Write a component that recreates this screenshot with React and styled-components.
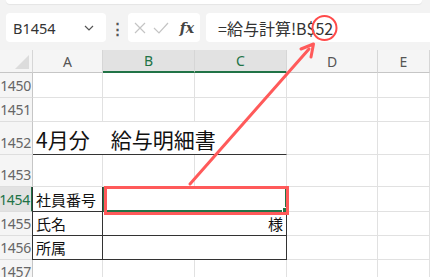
import React from 'react';
import styled, { createGlobalStyle } from 'styled-components';

const GlobalStyle = createGlobalStyle`
  html, body {
    margin: 0;
    padding: 0;
    background: #f3f3f3;
    overflow: hidden;
  }
  body {
    font-family: "Noto Sans CJK JP", "Noto Sans", sans-serif;
  }
`;

const cols = ['A', 'B', 'C', 'D', 'E'];

const App = () => {
  return (
    <Page>
      <GlobalStyle />
      <TopStrip />
      <FormulaBar>
        <NameBox>
          <span>B1454</span>
          <Chevron viewBox="0 0 10 6">
            <path d="M1 1l4 4 4-4" fill="none" stroke="#555" strokeWidth="1.2" />
          </Chevron>
        </NameBox>
        <Dots>⋮</Dots>
        <FxBox>
          <svg width="14" height="14" viewBox="0 0 14 14">
            <path d="M2 2l10 10M12 2L2 12" stroke="#c4c4c4" strokeWidth="1.2" />
          </svg>
          <svg width="16" height="14" viewBox="0 0 16 14">
            <path d="M1 7l5 5L15 2" fill="none" stroke="#c4c4c4" strokeWidth="1.2" />
          </svg>
          <Fx>fx</Fx>
        </FxBox>
        <FormulaInput>=給与計算!B$52</FormulaInput>
      </FormulaBar>

      <Sheet>
        <Corner />
        {cols.map((c) => (
          <ColHead key={c} selected={c === 'B' || c === 'C'}>{c}</ColHead>
        ))}

        <RowHead>1450</RowHead>
        {cols.map((c) => <Cell key={c} />)}

        <RowHead>1451</RowHead>
        {cols.map((c) => <Cell key={c} />)}

        <RowHead>1452</RowHead>
        <Cell span={3} bottomDark>
          <Title>4月分　給与明細書</Title>
        </Cell>
        <Cell />
        <Cell />

        <RowHead>1453</RowHead>
        {cols.map((c) => <Cell key={c} />)}

        <RowHead active>1454</RowHead>
        <Cell box leftDark>社員番号</Cell>
        <Cell span={2} selected />
        <Cell />
        <Cell />

        <RowHead>1455</RowHead>
        <Cell box leftDark>氏名</Cell>
        <Cell span={2} box align="right">様</Cell>
        <Cell />
        <Cell />

        <RowHead>1456</RowHead>
        <Cell box leftDark>所属</Cell>
        <Cell span={2} box />
        <Cell />
        <Cell />

        <RowHead>1457</RowHead>
        {cols.map((c) => <Cell key={c} />)}
      </Sheet>

      <Overlay width="430" height="277" viewBox="0 0 430 277">
        <rect x="105.5" y="187.5" width="182" height="26" fill="none" stroke="#ff5a5a" strokeWidth="3" />
        <circle cx="324.5" cy="28" r="12" fill="none" stroke="#ff4a4a" strokeWidth="2" />
        <line x1="190" y1="184" x2="309" y2="49" stroke="#ff5a5a" strokeWidth="3" strokeLinecap="round" />
        <path d="M313.5 44 L301 49 M313.5 44 L311 57" stroke="#ff5a5a" strokeWidth="3" strokeLinecap="round" fill="none" />
      </Overlay>
    </Page>
  );
};

const Page = styled.div`
  position: relative;
  width: 430px;
  height: 277px;
  background: #f3f3f3;
  overflow: hidden;
`;

const TopStrip = styled.div`
  height: 4px;
  margin: 0 8px 0 6px;
  background: #fff;
  border-radius: 0 0 6px 6px;
  box-shadow: 0 1px 1px rgba(0, 0, 0, 0.06);
`;

const FormulaBar = styled.div`
  display: flex;
  align-items: center;
  height: 29px;
  margin-top: 9px;
  padding-left: 6px;
`;

const NameBox = styled.div`
  width: 100px;
  height: 29px;
  box-sizing: border-box;
  background: #fff;
  border-radius: 4px;
  display: flex;
  align-items: center;
  justify-content: space-between;
  padding: 0 12px 0 7px;
  font-family: "Noto Sans", sans-serif;
  font-size: 14.5px;
  color: #333;
`;

const Chevron = styled.svg`
  width: 10px;
  height: 6px;
`;

const Dots = styled.div`
  width: 22px;
  text-align: center;
  font-size: 15px;
  font-weight: bold;
  color: #555;
`;

const FxBox = styled.div`
  width: 72px;
  height: 29px;
  box-sizing: border-box;
  background: #fff;
  border-radius: 4px;
  display: flex;
  align-items: center;
  gap: 6px;
  padding: 0 6px 0 5px;
`;

const Fx = styled.span`
  font-family: "DejaVu Serif", "Liberation Serif", serif;
  font-style: italic;
  font-weight: bold;
  font-size: 14px;
  color: #444;
  margin-left: auto;
`;

const FormulaInput = styled.div`
  flex: 1;
  height: 29px;
  margin-left: 6px;
  background: #fff;
  border-radius: 4px 0 0 4px;
  display: flex;
  align-items: center;
  padding-left: 12px;
  font-size: 16px;
  color: #333;
`;

const Sheet = styled.div`
  display: grid;
  grid-template-columns: 33px 70px 92px 92px 91px 1fr;
  grid-template-rows: 23px 25px 24px 33px 32px 25px 24px 24px 24px;
  margin-top: 8px;
  background: #fff;
`;

const Corner = styled.div`
  position: relative;
  background: #f5f5f5;
  border-right: 1px solid #d6d6d6;
  border-bottom: 1px solid #c6c6c6;
  &::after {
    content: '';
    position: absolute;
    right: 3px;
    bottom: 3px;
    border-style: solid;
    border-width: 0 0 14px 14px;
    border-color: transparent transparent #dcdcdc transparent;
  }
`;

const ColHead = styled.div`
  box-sizing: border-box;
  background: ${(p) => (p.selected ? '#e2e2e2' : '#f5f5f5')};
  color: ${(p) => (p.selected ? '#217346' : '#555')};
  border-right: 1px solid #d6d6d6;
  border-bottom: ${(p) => (p.selected ? '2px solid #217346' : '1px solid #c6c6c6')};
  display: flex;
  align-items: center;
  justify-content: center;
  font-family: "Noto Sans", sans-serif;
  font-size: 14px;
`;

const RowHead = styled.div`
  box-sizing: border-box;
  background: ${(p) => (p.active ? '#e2e2e2' : '#f5f5f5')};
  color: ${(p) => (p.active ? '#217346' : '#666')};
  border-right: ${(p) => (p.active ? '2px solid #217346' : '1px solid #c6c6c6')};
  border-bottom: 1px solid #dedede;
  display: flex;
  align-items: flex-end;
  justify-content: flex-end;
  padding: 0 1px 1px 0;
  font-family: "Noto Sans", sans-serif;
  font-size: 14px;
  letter-spacing: -0.3px;
  line-height: 20px;
  overflow: hidden;
`;

const Cell = styled.div`
  position: relative;
  box-sizing: border-box;
  grid-column: span ${(p) => p.span || 1};
  border-right: 1px solid ${(p) => (p.box ? '#333' : '#e1e1e1')};
  border-bottom: 1px solid ${(p) => (p.box || p.bottomDark ? '#333' : '#e1e1e1')};
  border-left: ${(p) => (p.leftDark ? '1px solid #333' : 'none')};
  margin-left: ${(p) => (p.leftDark ? '-1px' : '0')};
  display: flex;
  align-items: flex-end;
  justify-content: ${(p) => (p.align === 'right' ? 'flex-end' : 'flex-start')};
  padding: 0 3px 0 3px;
  font-size: 15px;
  line-height: 22px;
  color: #111;
  ${(p) => p.selected && `
    border: 2px solid #217346;
    border-right: 2px solid #217346;
    &::after {
      content: '';
      position: absolute;
      right: -4px;
      bottom: -4px;
      width: 5px;
      height: 5px;
      background: #217346;
      border: 1px solid #fff;
    }
  `}
`;

const Title = styled.span`
  font-size: 21px;
  line-height: 30px;
  white-space: nowrap;
  color: #111;
`;

const Overlay = styled.svg`
  position: absolute;
  left: 0;
  top: 0;
  pointer-events: none;
`;

export default App;
